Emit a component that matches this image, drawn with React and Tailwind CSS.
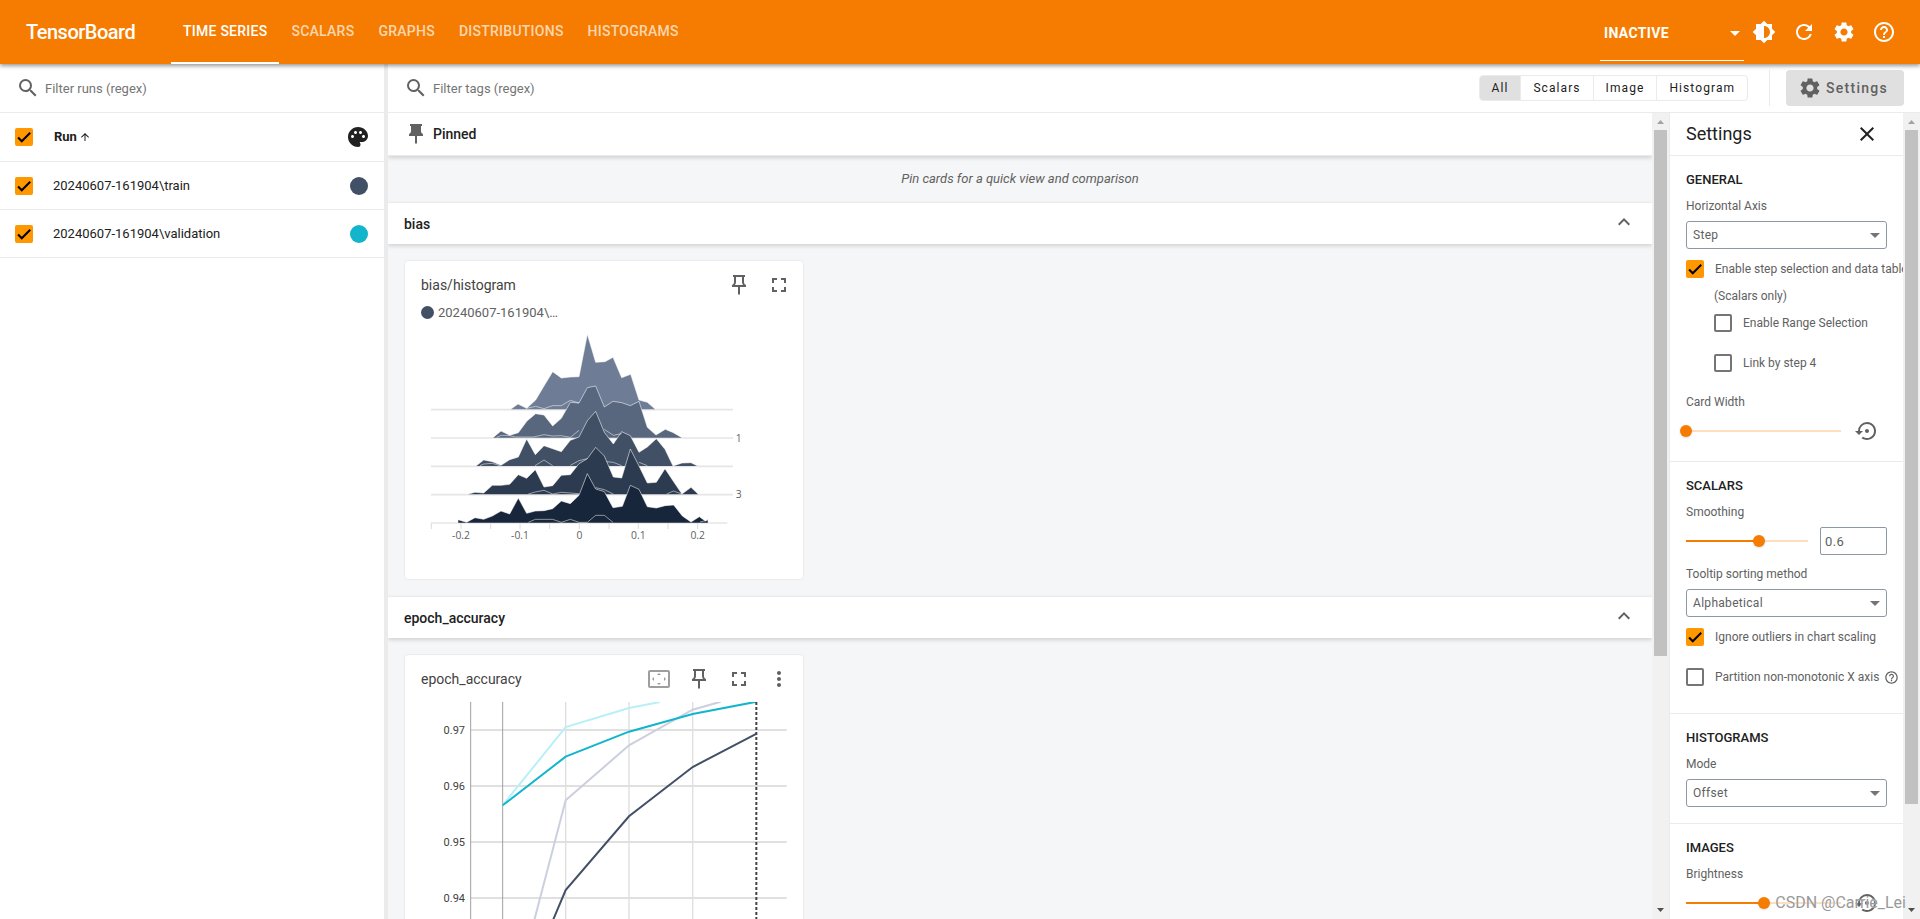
import React, { useId } from 'react';
import {
  MdArrowDropDown,
  MdArrowUpward,
  MdBrightness6,
  MdClose,
  MdExpandLess,
  MdFullscreen,
  MdHelpOutline,
  MdMoreVert,
  MdPalette,
  MdRefresh,
  MdSearch,
  MdSettings,
  MdSettingsBackupRestore,
} from 'react-icons/md';

const TABS = ['Time Series', 'Scalars', 'Graphs', 'Distributions', 'Histograms'];
const FILTERS = ['All', 'Scalars', 'Image', 'Histogram'];
const RUNS = [
  { name: '20240607-161904\\train', color: 'bg-[#425066]' },
  { name: '20240607-161904\\validation', color: 'bg-[#12b5cb]' },
];

// one ridge per epoch, oldest first
const RIDGES = [
  {
    color: '#6e7d95',
    base: 268,
    points: '332,268 354,252 380,265 407,240 432,198 458,155 484,174 511,171 537,170 562,43 587,127 615,125 639,112 665,173 692,163 717,240 742,247 766,268',
  },
  {
    color: '#58677e',
    base: 353,
    points: '279,353 303,333 329,346 355,338 381,303 407,281 432,285 458,318 484,295 511,247 537,249 562,203 587,198 613,261 639,244 665,248 691,257 717,244 742,322 768,345 796,328 820,338 846,353',
    inner: '380,265 407,259 432,266 458,257 484,257 511,241 537,249',
  },
  {
    color: '#425066',
    base: 438,
    points: '228,438 251,420 277,425 303,436 329,419 355,411 380,357 406,404 432,377 458,386 484,395 511,361 537,351 562,302 587,274 613,337 640,372 665,335 691,347 717,397 742,381 769,356 795,388 819,438 846,429 873,428 893,438',
    inner: '290,352 304,346 330,347 345,351 400,351 432,344 458,348 484,347 511,352 537,331 M613,328 640,346 665,341',
  },
  {
    color: '#2d3b51',
    base: 523,
    points: '203,523 225,517 251,519 277,496 303,496 329,493 355,464 380,475 406,449 432,501 458,497 484,466 511,464 537,431 562,416 587,382 613,408 640,471 665,474 691,387 717,438 742,489 769,487 795,446 820,484 846,522 873,502 895,523',
    inner: '240,437 251,432 277,430 300,437 M405,437 432,420 458,437 M511,436 537,422 562,416 M620,425 640,427 665,437 M717,427 742,437',
  },
  {
    color: '#18263c',
    base: 608,
    points: '174,608 174,599 200,607 225,593 251,598 277,588 303,573 329,582 355,534 380,580 406,573 432,572 458,566 484,543 511,551 537,526 562,461 587,507 613,515 639,563 667,559 691,496 717,508 742,560 769,564 795,557 821,555 847,588 873,606 898,590 916,603 924,598 924,608',
    inner: '385,522 406,516 432,511 458,522 484,517 537,521 M587,503 613,509 640,522 M800,522 820,513 846,522 M385,607 406,598 458,598 484,607 511,598 537,607 562,607 587,586 613,586 639,607 M900,606 924,600',
  },
];

const X_TICKS = [
  [183, '-0.2'],
  [360, '-0.1'],
  [538, '0'],
  [715, '0.1'],
  [893, '0.2'],
];

const Y_TICKS = [
  [420, '0.97'],
  [588, '0.96'],
  [756, '0.95'],
  [924, '0.94'],
];

const PIN_SHAPE = 'M6 2h12v2h-1v5c0 1.500.8 2.700 2 3v2h-6v7.500h-2V14H5v-2c1.200-.3 2-1.500 2-3V4H6z';

const PinIcon = ({ filled = false }) => (
  <svg viewBox="0 0 24 24" className="size-6" fill="currentColor" fillRule="evenodd" aria-hidden="true">
    <path d={filled ? PIN_SHAPE : `${PIN_SHAPE}M9 4v5c0 1.100-.3 2.100-1 3h8c-.7-.9-1-1.900-1-3V4z`} />
  </svg>
);

const FitIcon = () => (
  <svg viewBox="0 0 24 24" className="size-6" fill="none" aria-hidden="true">
    <rect x="2" y="4" width="20" height="16" rx="1" stroke="#9e9e9e" strokeWidth="2" />
    <path d="M12 6l2 2h-4zM12 18l2-2h-4zM5 12l2-2v4zM19 12l-2-2v4z" fill="#9e9e9e" />
  </svg>
);

const IconButton = ({ label, children }) => (
  <button type="button" aria-label={label} className="flex size-10 items-center justify-center text-2xl">
    {children}
  </button>
);

const Checkbox = ({ id, checked = false, label }) => (
  <span className="grid size-[18px] shrink-0">
    <input
      id={id}
      type="checkbox"
      aria-label={label}
      defaultChecked={checked}
      className="peer size-[18px] appearance-none rounded-xs border-2 border-[#757575] [grid-area:1/1] checked:border-0 checked:bg-[#ff9800]"
    />
    <svg viewBox="0 0 24 24" className="pointer-events-none hidden size-[18px] [grid-area:1/1] peer-checked:block" fill="none" aria-hidden="true">
      <path d="M4.1 12.7L9 17.6 20.3 6.3" stroke="#000" strokeWidth="2.700" />
    </svg>
  </span>
);

const CheckField = ({ label, checked, className, children }) => {
  const id = useId();
  return (
    <div className={`flex items-center whitespace-nowrap ${className}`}>
      <Checkbox id={id} checked={checked} />
      <label htmlFor={id} className="pl-[11px] leading-[18px]">{label}</label>
      {children}
    </div>
  );
};

const SelectField = ({ label, value, className = 'mt-[10px]' }) => {
  const id = useId();
  return (
    <div className={className}>
      <label htmlFor={id} className="block leading-4">{label}</label>
      <div className="relative mt-[7px] mr-4">
        <select id={id} defaultValue={value} className="block h-7 w-full appearance-none rounded-[3px] border border-[#8e98a3] bg-white pl-1.5 text-xs tracking-wide">
          <option>{value}</option>
        </select>
        <MdArrowDropDown className="pointer-events-none absolute top-0.5 right-0 size-6 text-[#757575]" />
      </div>
    </div>
  );
};

const Slider = ({ id, value, className = '' }) => (
  <div className={`relative h-0.5 bg-[#fddfc0] ${className}`}>
    <div className="h-0.5 bg-[#f57c00]" style={{ width: `${value}%` }} />
    <input
      id={id}
      type="range"
      defaultValue={value}
      className="absolute -top-[5px] -left-1.5 h-3 w-[calc(100%+12px)] appearance-none bg-transparent [&::-webkit-slider-thumb]:size-3 [&::-webkit-slider-thumb]:appearance-none [&::-webkit-slider-thumb]:rounded-full [&::-webkit-slider-thumb]:bg-[#f57c00] [&::-webkit-slider-thumb]:shadow-sm"
    />
  </div>
);

const ResetSlider = ({ label, value, className }) => {
  const id = useId();
  return (
    <div className={className}>
      <label htmlFor={id} className="block leading-4">{label}</label>
      <div className="mt-[9px] flex items-center">
        <Slider id={id} value={value} className="grow" />
        <button type="button" aria-label={`Reset ${label}`} className="mr-6 ml-[14px] text-2xl text-[#616161]">
          <MdSettingsBackupRestore />
        </button>
      </div>
    </div>
  );
};

const SettingsSection = ({ title, className, children }) => (
  <section className={`border-b border-[#ebebeb] pt-4 pl-4 ${className}`}>
    <h3 className="text-[13px] leading-4 font-medium text-[#212121] uppercase">{title}</h3>
    {children}
  </section>
);

const ScrollBar = ({ size }) => (
  <div className="flex w-[17px] shrink-0 flex-col items-center bg-[#f1f1f1]" aria-hidden="true">
    <svg viewBox="0 0 17 17" className="size-[17px] shrink-0">
      <path d="M5 11h7L8.500 7z" fill="#a3a3a3" />
    </svg>
    <div className="min-h-0 w-full grow px-0.5">
      <div className="w-full bg-[#c1c1c1]" style={{ height: size }} />
    </div>
    <svg viewBox="0 0 17 17" className="size-[17px] shrink-0">
      <path d="M5 6h7l-3.500 4z" fill="#505050" />
    </svg>
  </div>
);

const GroupHeader = ({ title }) => (
  <div className="relative flex h-[42px] items-center justify-between border-t border-[#ebebeb] bg-white px-4 shadow-[0_2px_4px_rgba(0,0,0,0.15)]">
    <h2 className="text-sm font-medium">{title}</h2>
    <button type="button" aria-label={`Collapse ${title}`} className="pb-1 text-2xl text-[#616161]">
      <MdExpandLess />
    </button>
  </div>
);

const HistogramChart = () => (
  <svg viewBox="63 24 1104 720" className="block h-[240px] w-[368px]" role="img" aria-label="bias/histogram">
    {[268, 353, 438, 523, 608].map((y) => (
      <path key={y} d={`M93 ${y + 1}H${y === 608 ? 982 : 999}`} stroke="#e6e6e6" strokeWidth="5" />
    ))}
    {RIDGES.map((r) => (
      <g key={r.base}>
        <polygon points={r.points} fill={r.color} />
        <polyline points={r.points} fill="none" stroke="#fff" strokeOpacity="0.55" strokeWidth="3" />
        {r.inner && <path d={`M${r.inner}`} fill="none" stroke="#fff" strokeOpacity="0.5" strokeWidth="3" />}
      </g>
    ))}
    {[94, 183, 272, 360, 449, 538, 627, 715, 804, 893].map((x) => (
      <path key={x} d={`M${x} 610v17`} stroke="#dcdcdc" strokeWidth="3" />
    ))}
    <g fill="#616161" fontFamily="'Open Sans', sans-serif" fontSize="31">
      {X_TICKS.map(([x, label]) => (
        <text key={label} x={x} y="657" textAnchor="middle">{label}</text>
      ))}
      <text x="1007" y="366">1</text>
      <text x="1007" y="534">3</text>
    </g>
  </svg>
);

const AccuracyChart = () => (
  <svg viewBox="93 336 1104 720" className="block h-[240px] w-[368px]" role="img" aria-label="epoch_accuracy">
    {[527, 717, 908].map((x) => (
      <path key={x} d={`M${x} 336V1056`} stroke="#dedede" strokeWidth="4" />
    ))}
    {Y_TICKS.map(([y, label]) => (
      <g key={label}>
        <path d={`M242 ${y}H1190`} stroke="#e0e0e0" strokeWidth="6" />
        <text x="225" y={y + 12} textAnchor="end" fill="#424242" fontSize="33">{label}</text>
      </g>
    ))}
    <path d="M242 336V1056M338 336V1056" stroke="#a0a0a0" strokeWidth="3" />
    <g fill="none" strokeWidth="6">
      <path d="M338 646L527 411 717 354 810 336" stroke="#b8f0f7" />
      <path d="M410 1080L434 986 527 631 717 466 908 359 992 335" stroke="#ccd0de" />
      <path d="M450 1080L490 988 527 900 717 679 908 531 1100 431" stroke="#425066" />
      <path d="M338 646L527 500 717 425 908 372 1100 335" stroke="#12b5cb" />
    </g>
    <path d="M1099 336V1056" stroke="#424242" strokeWidth="6" strokeDasharray="9 6" />
  </svg>
);

const Card = ({ title, actions, children }) => (
  <article className="h-[320px] w-[400px] rounded border border-[#ebebeb] bg-white">
    <div className="flex h-[47px] items-center justify-between pr-1 pl-4">
      <h3 className="text-sm text-[#424242]">{title}</h3>
      <div className="flex text-[#616161]">{actions}</div>
    </div>
    {children}
  </article>
);

const FilterInput = ({ placeholder }) => (
  <label className="flex grow items-center pl-4">
    <MdSearch className="size-6 text-[#616161]" />
    <input type="text" aria-label={placeholder} placeholder={placeholder} className="grow pt-0.5 pl-[5px] text-[13px] outline-none placeholder:text-[#757575]" />
  </label>
);

const Header = () => (
  <header className="relative z-10 flex h-16 shrink-0 items-center bg-[#f57c00] pr-4 pl-[26px] text-white shadow-[0_2px_4px_rgba(0,0,0,0.4)]">
    <h1 className="w-[145px] text-xl font-medium tracking-tight">TensorBoard</h1>
    <nav className="flex h-full grow">
      {TABS.map((tab, i) => (
        <a key={tab} href="#" className={`flex items-center border-b-2 px-3 text-sm font-medium tracking-[0.018em] uppercase ${i === 0 ? 'border-white' : 'border-transparent text-white/70'}`}>
          {tab}
        </a>
      ))}
    </nav>
    <div className="relative flex h-full w-36 items-end pb-[3px]">
      <select aria-label="Inactive dashboards" className="h-14 w-full appearance-none border-b border-white pt-px pl-1 text-sm font-bold tracking-wide">
        <option>INACTIVE</option>
      </select>
      <MdArrowDropDown className="pointer-events-none absolute top-[21px] -right-[3px] size-6" />
    </div>
    <IconButton label="Toggle dark mode"><MdBrightness6 /></IconButton>
    <IconButton label="Reload"><MdRefresh /></IconButton>
    <IconButton label="Open settings"><MdSettings /></IconButton>
    <IconButton label="Help"><MdHelpOutline /></IconButton>
  </header>
);

const RunsPanel = () => (
  <aside className="w-96 shrink-0 bg-white">
    <div className="flex h-[49px] border-b border-[#ebebeb]">
      <FilterInput placeholder="Filter runs (regex)" />
    </div>
    <table className="w-full text-[13px] text-[#212121]">
      <thead>
        <tr className="h-12 border-b border-[#ebebeb]">
          <th className="w-[53px] pl-[15px]"><Checkbox label="Select all runs" checked /></th>
          <th className="text-left font-bold">
            <span className="flex items-center gap-0.5 pl-px">Run <MdArrowUpward className="size-3" /></span>
          </th>
          <th className="w-[38px]"><MdPalette className="size-6" /></th>
        </tr>
      </thead>
      <tbody>
        {RUNS.map((run) => (
          <tr key={run.name} className="h-12 border-b border-[#ebebeb]">
            <td className="pt-px pl-[15px]"><Checkbox label={run.name} checked /></td>
            <td className="pt-px">{run.name}</td>
            <td className="pt-px pl-1"><div className={`size-[18px] rounded-full ${run.color}`} /></td>
          </tr>
        ))}
      </tbody>
    </table>
  </aside>
);

const SettingsPanel = () => {
  const smoothingId = useId();
  return (
    <aside className="flex w-[251px] shrink-0 border-l border-[#ebebeb] bg-white text-[#616161]">
      <div className="min-w-0 grow overflow-hidden text-xs">
        <div className="flex h-[43px] items-center justify-between border-b border-[#ebebeb] pr-6 pl-4 text-[#212121]">
          <h2 className="text-lg">Settings</h2>
          <button type="button" aria-label="Close settings" className="text-2xl"><MdClose /></button>
        </div>
        <SettingsSection title="General" className="pb-[18px]">
          <SelectField label="Horizontal Axis" value="Step" />
          <CheckField label="Enable step selection and data table" checked className="mt-[11px]" />
          <p className="mt-[9px] pl-7 leading-[18px]">(Scalars only)</p>
          <CheckField label="Enable Range Selection" className="mt-[9px] ml-7" />
          <CheckField label="Link by step 4" className="mt-[22px] ml-7" />
          <ResetSlider label="Card Width" value={0} className="mt-[22px]" />
        </SettingsSection>
        <SettingsSection title="Scalars" className="pb-[27px]">
          <label htmlFor={smoothingId} className="mt-[10px] block leading-4">Smoothing</label>
          <div className="mt-[7px] mr-4 flex items-center gap-3">
            <Slider id={smoothingId} value={60} className="grow" />
            <input type="number" aria-label="Smoothing value" defaultValue={0.6} className="h-7 w-[67px] appearance-none rounded-xs border border-[#8e98a3] pl-1 text-[13px] tracking-wide [&::-webkit-inner-spin-button]:appearance-none" />
          </div>
          <SelectField label="Tooltip sorting method" value="Alphabetical" className="mt-[11px]" />
          <CheckField label="Ignore outliers in chart scaling" checked className="mt-[11px]" />
          <CheckField label="Partition non-monotonic X axis" className="mt-[22px]">
            <MdHelpOutline className="ml-[5px] size-[15px] shrink-0" />
          </CheckField>
        </SettingsSection>
        <SettingsSection title="Histograms" className="pb-4">
          <SelectField label="Mode" value="Offset" />
        </SettingsSection>
        <SettingsSection title="Images" className="pb-4">
          <ResetSlider label="Brightness" value={50} className="mt-[10px]" />
        </SettingsSection>
      </div>
      <ScrollBar size="87.3%" />
    </aside>
  );
};

const Dashboard = () => (
  <div className="flex min-w-0 grow">
    <main className="min-w-0 grow overflow-hidden bg-[#f5f6f7]">
      <div className="relative flex h-[43px] items-center gap-[5px] border-b border-[#ebebeb] bg-white pl-4 shadow-[0_2px_4px_rgba(0,0,0,0.15)]">
        <span className="text-[#616161]"><PinIcon filled /></span>
        <h2 className="text-sm font-medium">Pinned</h2>
      </div>
      <p className="h-[46px] text-center text-[13px] leading-[45px] text-[#616161] italic">Pin cards for a quick view and comparison</p>
      <GroupHeader title="bias" />
      <div className="p-4">
        <Card
          title="bias/histogram"
          actions={
            <>
              <IconButton label="Pin card"><PinIcon /></IconButton>
              <IconButton label="Full size"><MdFullscreen /></IconButton>
            </>
          }
        >
          <div className="-mt-[5px] mb-1.5 flex h-[19px] items-center gap-1 pl-4 text-[13px] text-[#616161]">
            <span className="size-[13px] rounded-full bg-[#425066]" />
            20240607-161904\…
          </div>
          <div className="pl-4"><HistogramChart /></div>
        </Card>
      </div>
      <GroupHeader title="epoch_accuracy" />
      <div className="p-4">
        <Card
          title="epoch_accuracy"
          actions={
            <>
              <IconButton label="Fit domain to data"><FitIcon /></IconButton>
              <IconButton label="Pin card"><PinIcon /></IconButton>
              <IconButton label="Full size"><MdFullscreen /></IconButton>
              <IconButton label="More options"><MdMoreVert /></IconButton>
            </>
          }
        >
          <div className="pl-4"><AccuracyChart /></div>
        </Card>
      </div>
    </main>
    <ScrollBar size="68.1%" />
  </div>
);

export default function App() {
  return (
    <div className="relative flex h-screen flex-col overflow-hidden bg-white font-['Roboto',sans-serif] text-[#212121]">
      <Header />
      <div className="flex min-h-0 grow">
        <RunsPanel />
        <div className="w-1 shrink-0 bg-[#ebebeb]" />
        <div className="flex min-w-0 grow flex-col">
          <div className="flex h-[49px] shrink-0 items-center border-b border-[#ebebeb] pr-4">
            <FilterInput placeholder="Filter tags (regex)" />
            <div className="flex h-[26px] divide-x divide-[#ebebeb] overflow-hidden rounded border border-[#ebebeb] text-xs tracking-[0.09em]">
              {FILTERS.map((f, i) => (
                <button key={f} type="button" className={`px-3 ${i === 0 ? 'bg-[#e0e0e0]' : ''}`}>{f}</button>
              ))}
            </div>
            <div className="mr-4 ml-[21px] h-9 w-px bg-[#ebebeb]" />
            <button type="button" className="flex h-9 items-center gap-1 rounded bg-[#e0e0e0] pr-4 pl-3 text-sm font-medium tracking-[0.09em] text-[#616161]">
              <MdSettings className="size-6" />
              Settings
            </button>
          </div>
          <div className="flex min-h-0 grow">
            <Dashboard />
            <SettingsPanel />
          </div>
        </div>
      </div>
      <p className="pointer-events-none absolute right-3.5 bottom-1 text-base text-[#999] [text-shadow:0_0_1px_#fff]">CSDN @Carrie_Lei</p>
    </div>
  );
}
